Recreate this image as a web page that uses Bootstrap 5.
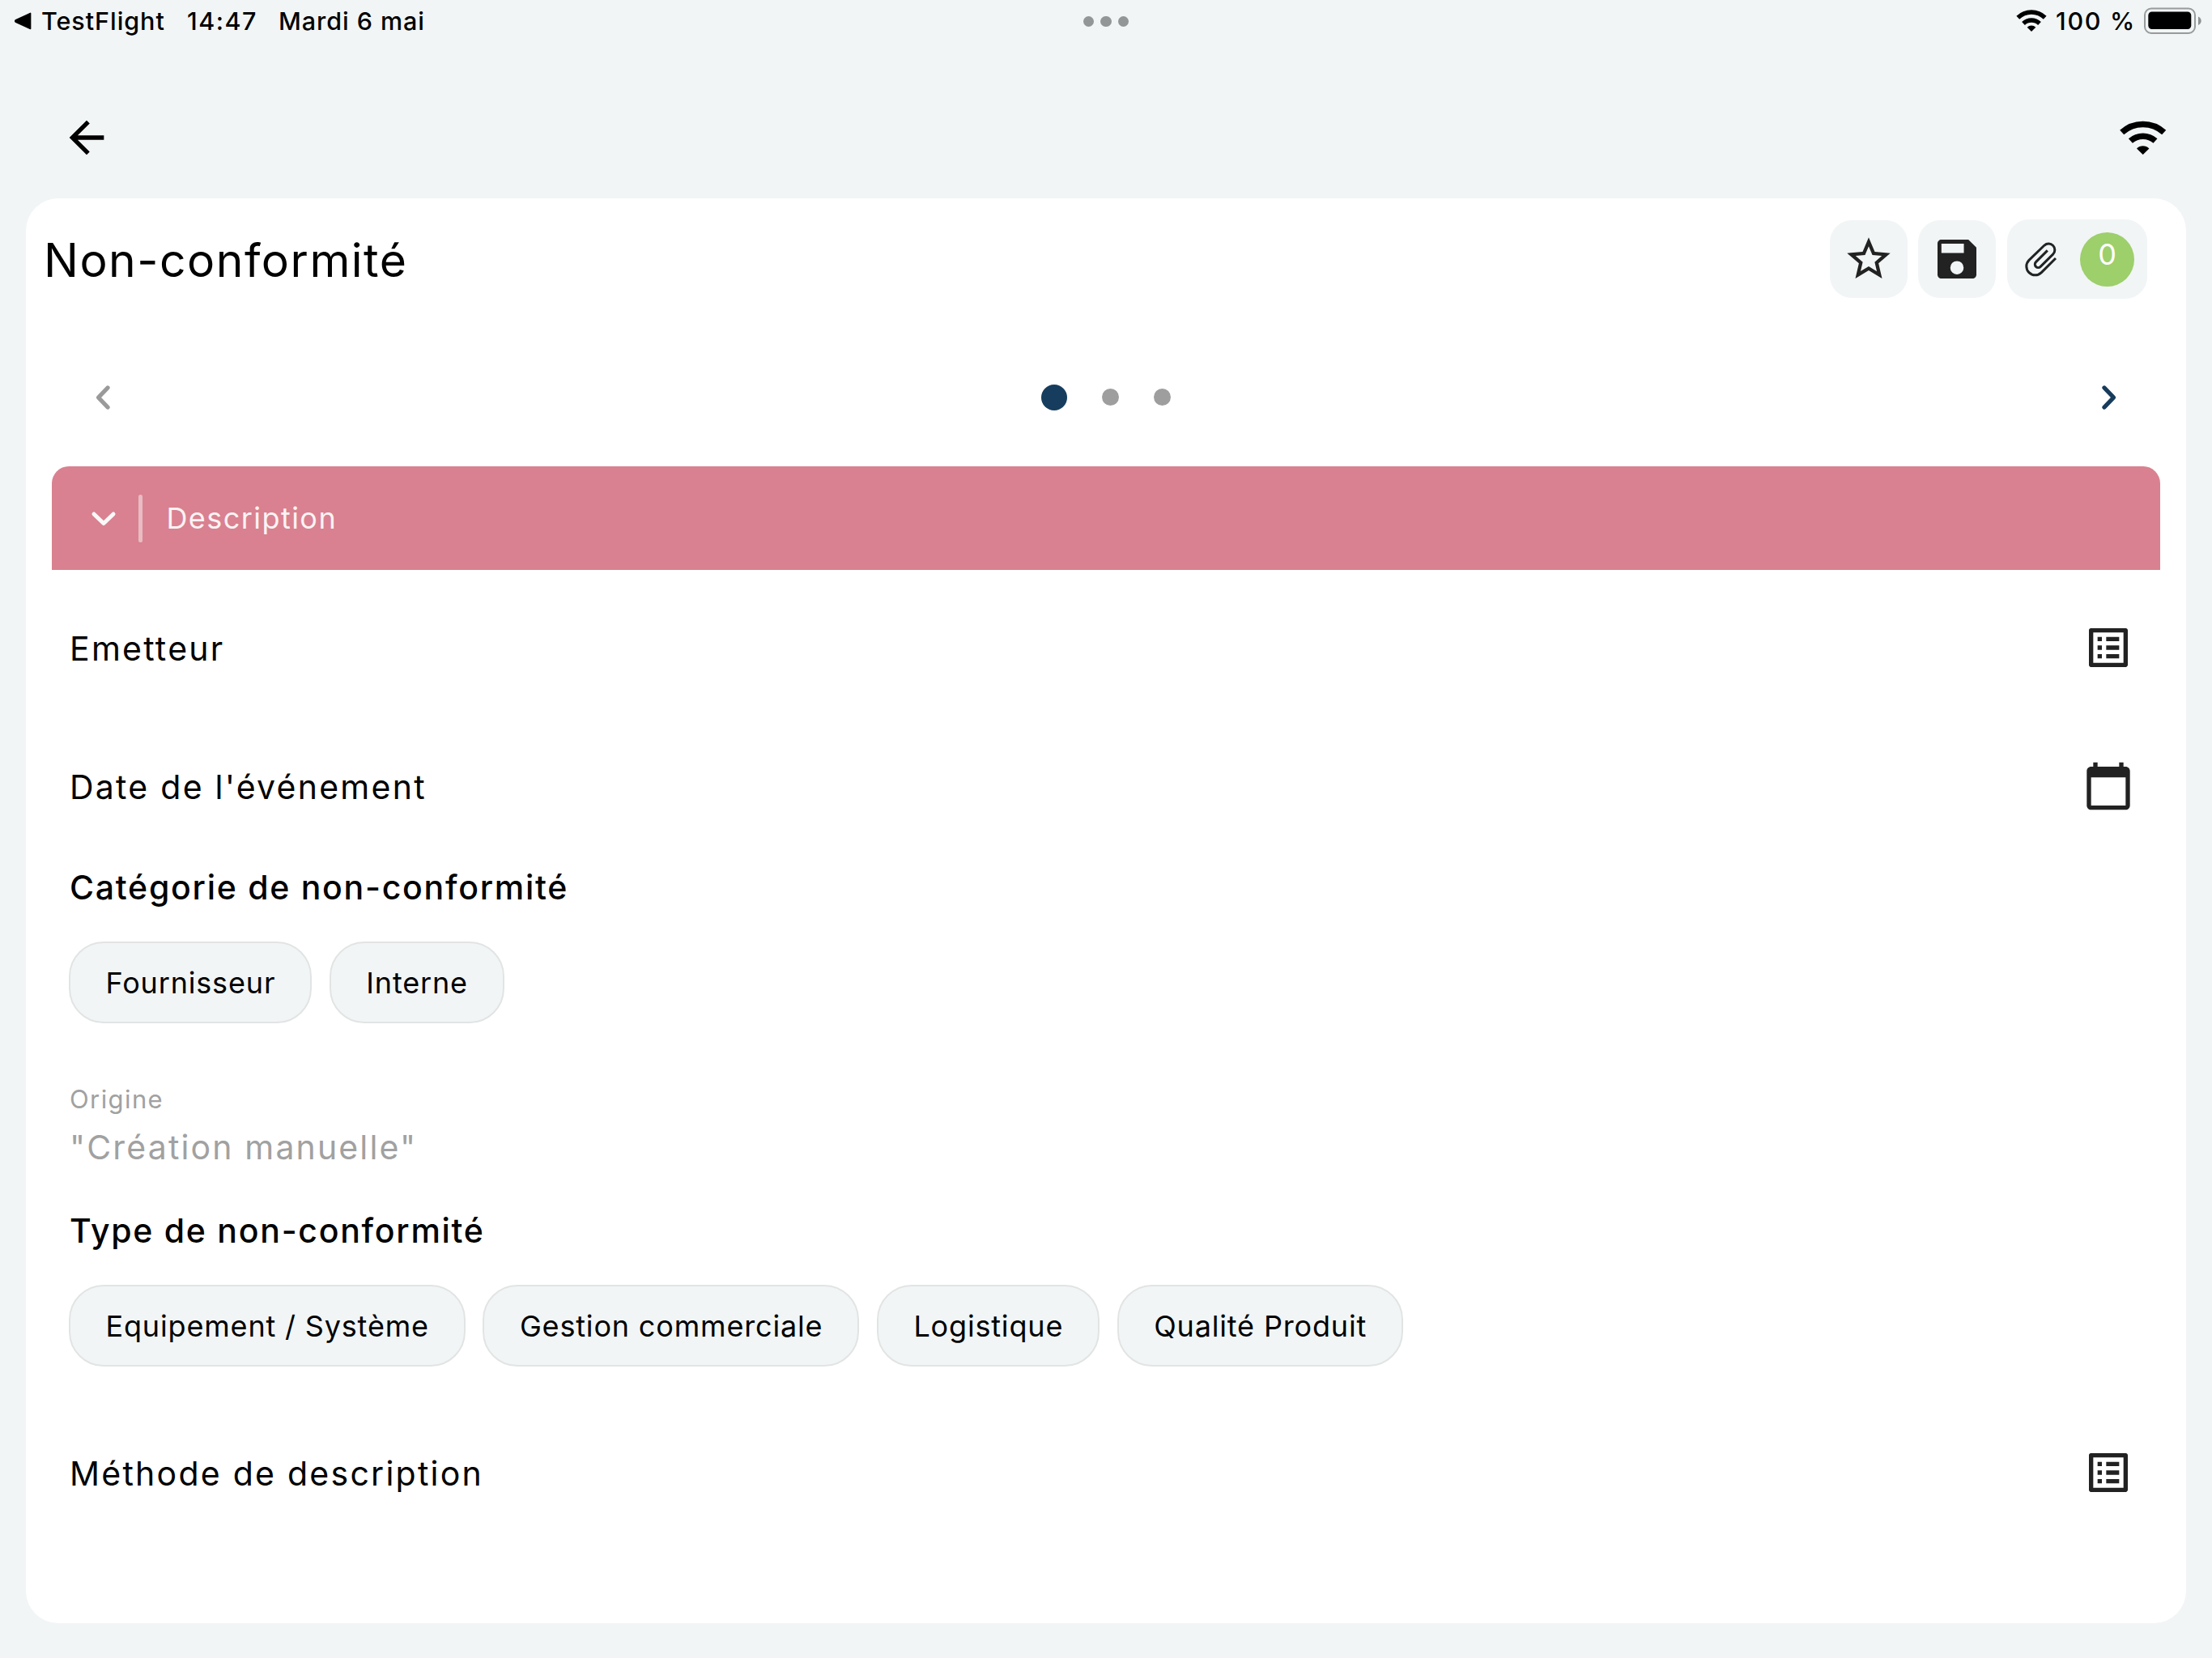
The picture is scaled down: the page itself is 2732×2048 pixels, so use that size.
<!DOCTYPE html>
<html lang="fr">
<head>
<meta charset="utf-8">
<meta name="viewport" content="width=device-width, initial-scale=1">
<title>Non-conformité</title>
<link rel="stylesheet" href="https://cdn.jsdelivr.net/npm/bootstrap@5.3.0/dist/css/bootstrap.min.css">
<style>
  body { background: #f1f5f6; color: #000; font-family: Inter, "Liberation Sans", sans-serif; font-size: 41px; line-height: 48px; overflow: hidden; }
  svg { display: block; flex: none; }
  .ic { width: 64px; height: 64px; fill: #212221; }
  .ic-back { fill: #000; }

  .status-bar { height: 52px; font-size: 30.5px; font-weight: 500; line-height: 52px; padding: 0 13px 0 18px; letter-spacing: .95px; }
  .status-app { margin-left: 12px; width: 180px; }
  .status-time { width: 113px; letter-spacing: 1.5px; }
  .status-charge { margin: 0 10px 0 11px; letter-spacing: 1.7px; }
  .multitask { left: 50%; top: 20px; gap: 8px; margin-left: -28px; }
  .multitask span { width: 13.4px; height: 13.4px; border-radius: 50%; background: #929696; }

  .app-bar { height: 193px; padding: 86px 53px 43px 75px; }

  .sheet { margin: 0 32px; height: 1760px; background: #fff; border-radius: 40px; overflow: hidden; }
  .sheet-head { padding: 26px 48px 0 22px; height: 124px; }
  .sheet-title { font-size: 57px; line-height: 64px; font-weight: 400; letter-spacing: 1.5px; padding-top: 4px; margin: 0; }
  .tools { gap: 13.5px; }
  .tool { background: #f1f5f6; border: 0; border-radius: 27px; padding: 16px; width: 96px; height: 96px; }
  .tool-files { width: 173.5px; height: 98px; padding: 0 16px 0 20px; }
  .tool-count { width: 67px; height: 67px; border-radius: 50%; background: #9dcf6b; color: #fff; font-size: 36px; line-height: 55px; font-weight: 400; }

  .pager { height: 207px; padding: 36px 56px 0 56px; }
  .pager-dots { gap: 42.5px; }
  .pager-dots span { width: 21.3px; height: 21.3px; border-radius: 50%; background: #9e9e9e; }
  .pager-dots .on { width: 32px; height: 32px; background: #163d5d; }

  .section-bar { height: 128px; margin: 0 32px; padding-left: 48px; background: #d98190; border-radius: 21px 21px 0 0; color: #faf3f4; font-size: 36px; letter-spacing: 1.45px; }
  .section-rule { width: 5.4px; height: 59px; border-radius: 3px; background: #e8bcc3; margin: 0 29px 0 27px; }

  .form-area { padding: 0 64px 0 54px; }
  .field { letter-spacing: 2.25px; }
  .field span { padding-top: 1px; }
  .field-a { height: 192px; }
  .field-b { height: 150px; }
  .group-label { font-weight: 500; letter-spacing: 1.73px; height: 102px; line-height: 101px; }
  .chip-row { margin: 15px 0 0 -1px; gap: 21.5px; }
  .chip { height: 101px; padding: 0 43px 0 43.5px; border: 2px solid #e2e4e4; border-radius: 43px; background: #f1f5f6; color: #000; font-size: 36px; line-height: 96px; letter-spacing: .83px; }
  .origin { margin-top: 76px; color: #a1a1a1; }
  .origin-label { font-size: 31px; line-height: 36px; letter-spacing: 1.4px; }
  .origin-value { margin-top: 17px; letter-spacing: 2.15px; }
  .group-second { margin-top: 29px; }
  .field-last { margin-top: 35px; }
</style>
<script src="https://cdn.jsdelivr.net/npm/bootstrap@5.3.0/dist/js/bootstrap.bundle.min.js"></script>
</head>
<body>
<header>
  <div class="status-bar d-flex align-items-center position-relative">
    <svg width="21" height="22" viewBox="0 0 21 22"><path d="M19.600 1.400v19.200L1.600 12.300q-1.800-1.300 0-2.600z" stroke="#000" stroke-width="1.500" stroke-linejoin="round"/></svg>
    <span class="status-app">TestFlight</span>
    <span class="status-time">14:47</span>
    <span>Mardi 6 mai</span>
    <div class="multitask d-flex position-absolute"><span></span><span></span><span></span></div>
    <svg class="ms-auto" width="38" height="28" viewBox="0 0 38 28"><g fill="none" stroke="#000" stroke-width="5.400"><path d="M2.300 9.700a24 24 0 0 1 33.400 0"/><path d="M9 17a14.500 14.500 0 0 1 20 0"/></g><path d="M19 27l-5.300-5.300a7.700 7.700 0 0 1 10.600 0z"/></svg>
    <span class="status-charge">100 %</span>
    <svg width="71" height="34" viewBox="0 0 71 34"><rect x="1" y="1.500" width="62" height="30.500" rx="8" fill="none" stroke="#989a9b" stroke-width="2"/><rect x="5.300" y="5.500" width="53" height="21.500" rx="4.500"/><path d="M67 11.500q3.700 2 3.700 5.300t-3.700 5.300z" fill="#8f9192"/></svg>
  </div>
  <nav class="app-bar d-flex justify-content-between align-items-center">
    <svg class="ic ic-back" viewBox="0 0 24 24"><path d="M20 11H7.830l5.590-5.590L12 4l-8 8 8 8 1.410-1.410L7.830 13H20v-2z"/></svg>
    <svg width="64" height="64" viewBox="0 0 64 64"><g fill="none" stroke="#000" stroke-width="7.500"><path d="M5.700 25.500a38.500 38.500 0 0 1 52 0"/><path d="M16.400 36a23 23 0 0 1 30.600 0"/></g><path d="M31.700 53l-7.700-7.500a11 11 0 0 1 15.400 0z"/></svg>
  </nav>
</header>

<main class="sheet">
  <div class="sheet-head d-flex justify-content-between align-items-center">
    <h1 class="sheet-title">Non-conformité</h1>
    <div class="tools d-flex align-items-center">
      <button class="tool" aria-label="Favori"><svg class="ic" viewBox="0 0 24 24"><path d="M22 9.240l-7.190-.62L12 2 9.190 8.630 2 9.240l5.460 4.730L5.820 21 12 17.270 18.180 21l-1.630-7.030L22 9.240zM12 15.400l-3.760 2.270 1-4.280-3.320-2.880 4.380-.38L12 6.100l1.710 4.040 4.380.38-3.320 2.880 1 4.280L12 15.400z"/></svg></button>
      <button class="tool" aria-label="Enregistrer"><svg class="ic" viewBox="0 0 24 24"><path fill-rule="evenodd" d="M17.300 3H4.800C3.800 3 3 3.800 3 4.800v14.400C3 20.200 3.800 21 4.800 21h14.400c1 0 1.800-.8 1.800-1.800V6.700L17.300 3zM12 19.100a3.100 3.100 0 1 1 0-6.200 3.100 3.100 0 0 1 0 6.200zM15.200 9.200H4.800V4.900h10.400z"/></svg></button>
      <button class="tool tool-files d-flex justify-content-between align-items-center" aria-label="Pièces jointes">
        <svg width="43.300" height="46.700" viewBox="800 890 130 140"><path fill="none" stroke="#222323" stroke-width="9" d="M920 956L867 1009A32.500 32.500 0 0 1 821 963L878 908A23 23 0 0 1 910.500 940.500L863.500 987A12 12 0 0 1 846.500 970L889.500 927"/></svg>
        <span class="tool-count text-center">0</span>
      </button>
    </div>
  </div>

  <div class="pager d-flex justify-content-between align-items-center">
    <svg width="64" height="64" viewBox="0 0 64 64"><path d="M45 20L33.500 32 45 44" fill="none" stroke="#9a9a9a" stroke-width="5.300" stroke-linecap="round" stroke-linejoin="round"/></svg>
    <div class="pager-dots d-flex align-items-center"><span class="on"></span><span></span><span></span></div>
    <svg width="64" height="64" viewBox="0 0 64 64"><path d="M19 20l11.500 12L19 44" fill="none" stroke="#173c5c" stroke-width="5.300" stroke-linecap="round" stroke-linejoin="round"/></svg>
  </div>

  <section>
    <div class="section-bar d-flex align-items-center">
      <svg width="32" height="32" viewBox="0 0 32 32"><path d="M4 11l12 11.500L28 11" fill="none" stroke="#faf8f8" stroke-width="5" stroke-linecap="round" stroke-linejoin="round"/></svg>
      <span class="section-rule"></span>
      <span>Description</span>
    </div>

    <div class="form-area">
      <div class="field field-a d-flex justify-content-between align-items-center">
        <span>Emetteur</span>
        <svg class="ic" viewBox="0 0 24 24"><path d="M19 5v14H5V5h14m1.100-2H3.900c-.5 0-.9.4-.9.9v16.200c0 .4.4.9.9.9h16.200c.4 0 .9-.5.9-.9V3.900c0-.5-.5-.9-.9-.9zM11 7h6v2h-6V7zm0 4h6v2h-6v-2zm0 4h6v2h-6v-2zM7 7h2v2H7V7zm0 4h2v2H7v-2zm0 4h2v2H7v-2z"/></svg>
      </div>
      <div class="field field-b d-flex justify-content-between align-items-center">
        <span>Date de l'événement</span>
        <svg class="ic" viewBox="0 0 24 24"><path d="M20 3h-1V1h-2v2H7V1H5v2H4c-1.100 0-2 .9-2 2v16c0 1.100.9 2 2 2h16c1.100 0 2-.9 2-2V5c0-1.100-.9-2-2-2zm0 18H4V8h16v13z"/></svg>
      </div>

      <div class="group-label">Catégorie de non-conformité</div>
      <div class="chip-row d-flex">
        <button class="chip">Fournisseur</button>
        <button class="chip">Interne</button>
      </div>

      <div class="origin">
        <div class="origin-label">Origine</div>
        <div class="origin-value">"Création manuelle"</div>
      </div>

      <div class="group-label group-second">Type de non-conformité</div>
      <div class="chip-row d-flex">
        <button class="chip">Equipement / Système</button>
        <button class="chip">Gestion commerciale</button>
        <button class="chip">Logistique</button>
        <button class="chip">Qualité Produit</button>
      </div>

      <div class="field field-a field-last d-flex justify-content-between align-items-center">
        <span>Méthode de description</span>
        <svg class="ic" viewBox="0 0 24 24"><path d="M19 5v14H5V5h14m1.100-2H3.900c-.5 0-.9.4-.9.9v16.200c0 .4.4.9.9.9h16.200c.4 0 .9-.5.9-.9V3.900c0-.5-.5-.9-.9-.9zM11 7h6v2h-6V7zm0 4h6v2h-6v-2zm0 4h6v2h-6v-2zM7 7h2v2H7V7zm0 4h2v2H7v-2zm0 4h2v2H7v-2z"/></svg>
      </div>
    </div>
  </section>
</main>
</body>
</html>
